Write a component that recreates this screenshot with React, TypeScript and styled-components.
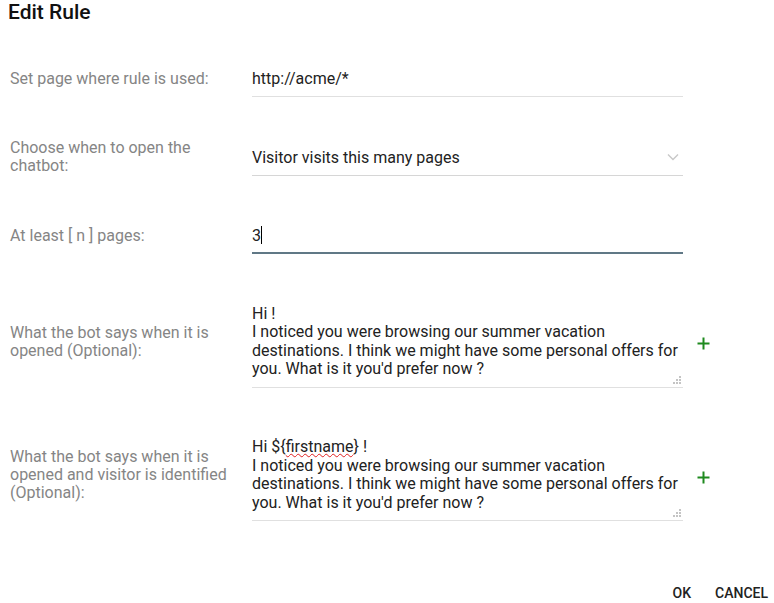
import { createGlobalStyle, styled, css } from "styled-components";

const GlobalStyle = createGlobalStyle`
  html, body {
    margin: 0;
    padding: 0;
    background: #fff;
    font-family: Roboto, "Liberation Sans", Arial, sans-serif;
  }
`;

const Dialog = styled.div`
  width: 774px;
  height: 603px;
  box-sizing: border-box;
  display: flex;
  flex-direction: column;
`;

const Title = styled.h2`
  margin: 0;
  padding: 0 0 0 8px;
  height: 24px;
  line-height: 24px;
  font-size: 21px;
  font-weight: 500;
  color: #111;
`;

const Form = styled.div`
  display: flex;
  flex-direction: column;
  gap: 45.5px;
  padding: 40px 0 0 10px;
`;

const Row = styled.div`
  display: grid;
  grid-template-columns: 242px 431px 30px;
  align-items: center;
`;

const Label = styled.div`
  font-size: 16px;
  line-height: 18px;
  color: #858585;
  padding-right: 16px;
  margin-top: -4px;
`;

const Field = styled.div<{ $focused?: boolean }>`
  position: relative;
  box-sizing: border-box;
  padding: 5px 0 8px;
  font-size: 16px;
  line-height: 19px;
  color: #222;
  border-bottom: 1px solid #e0e0e0;
  ${(p) =>
    p.$focused &&
    css`
      border-bottom: 2px solid #607886;
      padding-bottom: 7px;
    `}
`;

const SelectField = styled(Field)`
  display: flex;
  justify-content: space-between;
  align-items: center;
  border-bottom-color: #d6d6d6;
`;

const Caret = styled.span`
  display: inline-block;
  width: 1px;
  height: 18px;
  background: #000;
  vertical-align: -3px;
`;

const MessageText = styled(Field)`
  white-space: pre-line;
  line-height: 18.5px;
`;

const Misspelled = styled.span`
  text-decoration: underline wavy #e02020;
  text-decoration-thickness: 1px;
  text-underline-offset: 1px;
`;

const Grip = styled.svg`
  position: absolute;
  right: 2px;
  bottom: 3px;
`;

const AddButton = styled.button`
  border: 0;
  background: none;
  padding: 0 0 0 14px;
  margin: 0;
  display: flex;
  align-items: center;
  cursor: pointer;
`;

const Actions = styled.div`
  margin-top: auto;
  display: flex;
  justify-content: flex-end;
`;

const TextButton = styled.button`
  border: 0;
  background: none;
  font-family: Roboto, "Liberation Sans", Arial, sans-serif;
  font-size: 14px;
  line-height: 16px;
  font-weight: 500;
  color: #222;
  padding: 8px 6px 2px;
  margin-left: 12px;
  cursor: pointer;
`;

const ResizeGrip = () => (
  <Grip width="8" height="8" viewBox="0 0 8 8">
    {[
      [6, 0],
      [6, 3],
      [3, 3],
      [6, 6],
      [3, 6],
      [0, 6],
    ].map(([x, y]) => (
      <rect key={`${x}-${y}`} x={x} y={y} width="2" height="2" fill="#c4c4c4" />
    ))}
  </Grip>
);

const Plus = () => (
  <AddButton aria-label="add">
    <svg width="13" height="13" viewBox="0 0 13 13">
      <path d="M6.5 0.5v12M0.5 6.5h12" stroke="#1e8a1e" strokeWidth="2" />
    </svg>
  </AddButton>
);

const Chevron = () => (
  <svg width="12" height="8" viewBox="0 0 12 8" style={{ marginRight: 4 }}>
    <path d="M1 1.5l5 5 5-5" fill="none" stroke="#c8c8c8" strokeWidth="1.4" />
  </svg>
);

const message =
  "I noticed you were browsing our summer vacation\ndestinations. I think we might have some personal offers for\nyou. What is it you'd prefer now ?";

export default function App() {
  return (
    <Dialog>
      <GlobalStyle />
      <Title>Edit Rule</Title>
      <Form>
        <Row>
          <Label>Set page where rule is used:</Label>
          <Field>http://acme/*</Field>
        </Row>
        <Row>
          <Label>Choose when to open the chatbot:</Label>
          <SelectField>
            <span>Visitor visits this many pages</span>
            <Chevron />
          </SelectField>
        </Row>
        <Row>
          <Label>At least [ n ] pages:</Label>
          <Field $focused>
            3<Caret />
          </Field>
        </Row>
        <Row>
          <Label>What the bot says when it is opened (Optional):</Label>
          <MessageText>
            {"Hi !\n" + message}
            <ResizeGrip />
          </MessageText>
          <Plus />
        </Row>
        <Row>
          <Label>What the bot says when it is opened and visitor is identified (Optional):</Label>
          <MessageText>
            {"Hi ${"}
            <Misspelled>firstname</Misspelled>
            {"} !\n" + message}
            <ResizeGrip />
          </MessageText>
          <Plus />
        </Row>
      </Form>
      <Actions>
        <TextButton>OK</TextButton>
        <TextButton>CANCEL</TextButton>
      </Actions>
    </Dialog>
  );
}
